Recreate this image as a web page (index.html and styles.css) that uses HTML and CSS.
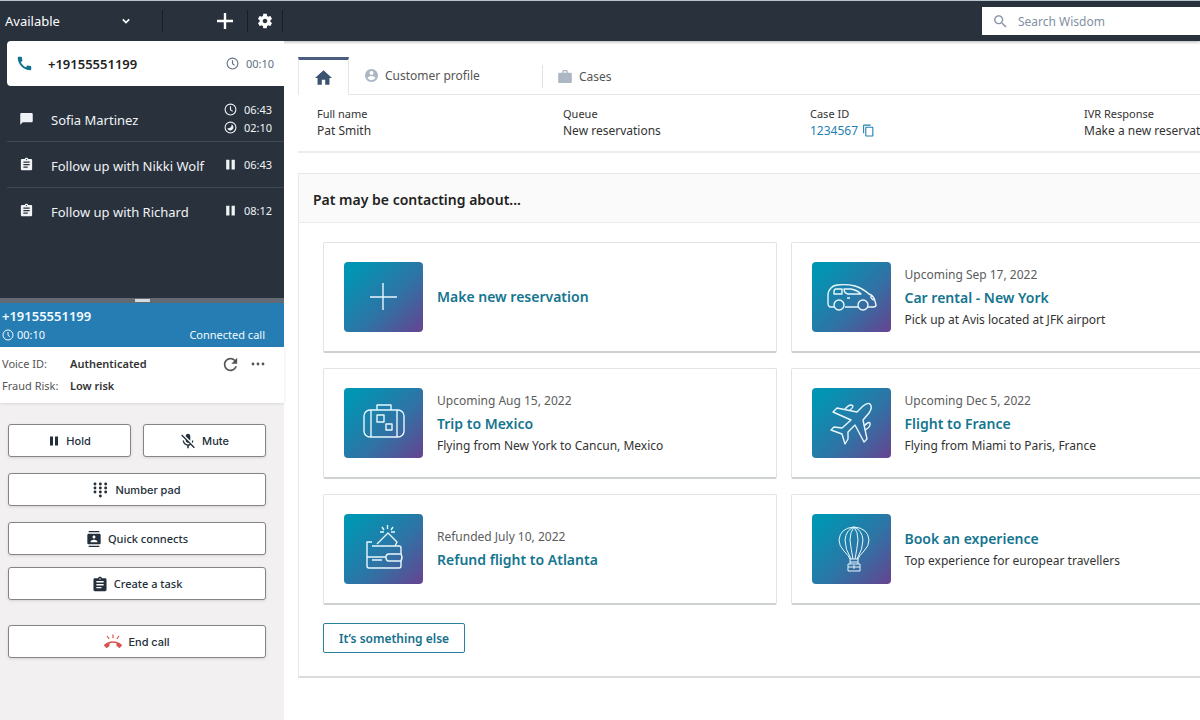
FILE: index.html
```
<!DOCTYPE html>
<html lang="en">
<head>
    <meta charset="UTF-8">
    <meta name="viewport" content="width=device-width, initial-scale=1.0">
    <title>Agent workspace</title>
    <link rel="stylesheet" href="styles.css">
</head>
<body>
    <!-- shared icons -->
    <svg class="defs" width="0" height="0">
        <symbol id="clock" viewBox="0 0 24 24"><g fill="none" stroke="currentColor" stroke-width="2"><circle cx="12" cy="12" r="10"/><path d="M12 6v6.500l4 3"/></g></symbol>
        <symbol id="pause" viewBox="0 0 24 24"><path d="M4 3h6v18H4zM14 3h6v18h-6z"/></symbol>
        <symbol id="task" viewBox="0 0 24 24"><path d="M19 3h-4.180C14.400 1.840 13.300 1 12 1c-1.300 0-2.400.84-2.820 2H5c-1.100 0-2 .9-2 2v14c0 1.100.9 2 2 2h14c1.100 0 2-.9 2-2V5c0-1.100-.9-2-2-2zm-7 0c.55 0 1 .45 1 1s-.45 1-1 1-1-.45-1-1 .45-1 1-1zm2 14H7v-2h7v2zm3-4H7v-2h10v2zm0-4H7V7h10v2z"/></symbol>
    </svg>

    <header class="topbar">
        <div class="status">
            <select class="status-select" aria-label="Status">
                <option>Available</option>
            </select>
            <svg class="chevron" viewBox="0 0 10 10"><path d="M1 3l4 4 4-4"/></svg>
        </div>
        <button class="bar-btn add" aria-label="New">
            <svg viewBox="0 0 16 16" width="16" height="16"><path d="M8 0v16M0 8h16" stroke="currentColor" stroke-width="2.400"/></svg>
        </button>
        <button class="bar-btn gear" aria-label="Settings">
            <svg viewBox="0 0 24 24" width="18" height="18"><path d="M19.14 12.94c.04-.3.06-.61.06-.94 0-.32-.02-.64-.07-.94l2.03-1.58c.18-.14.23-.41.12-.61l-1.92-3.32c-.12-.22-.37-.29-.59-.22l-2.39.96c-.5-.38-1.03-.7-1.62-.94l-.36-2.54c-.04-.24-.24-.41-.48-.41h-3.84c-.24 0-.43.17-.47.41l-.36 2.54c-.59.24-1.13.57-1.62.94l-2.39-.96c-.22-.08-.47 0-.59.22L2.74 8.87c-.12.21-.08.47.12.61l2.03 1.58c-.05.3-.09.63-.09.94s.02.64.07.94l-2.03 1.58c-.18.14-.23.41-.12.61l1.92 3.32c.12.22.37.29.59.22l2.39-.96c.5.38 1.03.7 1.62.94l.36 2.54c.05.24.24.41.48.41h3.84c.24 0 .44-.17.47-.41l.36-2.54c.59-.24 1.13-.56 1.62-.94l2.39.96c.22.08.47 0 .59-.22l1.92-3.32c.12-.22.07-.47-.12-.61l-2.01-1.58zM12 15c-1.700 0-3-1.300-3-3s1.300-3 3-3 3 1.300 3 3-1.300 3-3 3z"/></svg>
        </button>
        <label class="search">
            <svg viewBox="0 0 24 24" width="17" height="17"><path d="M15.5 14h-.79l-.28-.27C15.41 12.59 16 11.11 16 9.500 16 5.910 13.090 3 9.500 3S3 5.910 3 9.500 5.910 16 9.500 16c1.610 0 3.090-.59 4.230-1.570l.27.28v.79l5 4.990L20.490 19l-4.990-5zm-6 0C7.010 14 5 11.990 5 9.500S7.010 5 9.500 5 14 7.010 14 9.500 11.990 14 9.500 14z"/></svg>
            <input type="text" placeholder="Search Wisdom" aria-label="Search Wisdom">
        </label>
    </header>

    <div class="layout">
        <aside class="sidebar">
            <ul class="contacts">
                <li class="contact active">
                    <svg class="kind" viewBox="2 2 20 20"><path d="M20.010 15.380c-1.230 0-2.420-.2-3.530-.56-.35-.12-.74-.03-1.010.24l-1.570 1.970c-2.830-1.350-5.480-3.900-6.890-6.830l1.950-1.660c.27-.28.35-.67.24-1.020-.37-1.110-.56-2.300-.56-3.530 0-.54-.45-.99-.99-.99H4.190C3.650 3 3 3.240 3 3.990 3 13.280 10.730 21 20.010 21c.71 0 .99-.63.99-1.180v-3.450c0-.54-.45-.99-.99-.99z"/></svg>
                    <span class="name">+19155551199</span>
                    <span class="times"><span class="time"><svg><use href="#clock"/></svg>00:10</span></span>
                </li>
                <li class="contact chat">
                    <svg class="kind" viewBox="0 0 24 24"><path d="M20 3H4c-1.100 0-2 .9-2 2v17l4-4h14c1.100 0 2-.9 2-2V5c0-1.100-.9-2-2-2z"/></svg>
                    <span class="name">Sofia Martinez</span>
                    <span class="times">
                        <span class="time"><svg><use href="#clock"/></svg>06:43</span>
                        <span class="time"><svg viewBox="0 0 24 24"><circle cx="12" cy="12" r="10" fill="none" stroke="currentColor" stroke-width="2"/><path d="M14 6q1 7-8 8a6 6 0 1 0 8-8z"/></svg>02:10</span>
                    </span>
                </li>
                <li class="contact">
                    <svg class="kind"><use href="#task"/></svg>
                    <span class="name">Follow up with Nikki Wolf</span>
                    <span class="times"><span class="time"><svg><use href="#pause"/></svg>06:43</span></span>
                </li>
                <li class="contact">
                    <svg class="kind"><use href="#task"/></svg>
                    <span class="name">Follow up with Richard</span>
                    <span class="times"><span class="time"><svg><use href="#pause"/></svg>08:12</span></span>
                </li>
            </ul>
            <div class="splitter"></div>

            <section class="call">
                <div class="call-number">+19155551199</div>
                <div class="call-row">
                    <span class="time"><svg><use href="#clock"/></svg>00:10</span>
                    <span>Connected call</span>
                </div>
            </section>

            <section class="voice">
                <dl>
                    <dt>Voice ID:</dt><dd>Authenticated</dd>
                    <dt>Fraud Risk:</dt><dd>Low risk</dd>
                </dl>
                <div class="voice-tools">
                    <button aria-label="Refresh"><svg viewBox="3 3 18 18" width="15" height="15"><path d="M17.65 6.35C16.2 4.9 14.21 4 12 4c-4.42 0-7.99 3.58-7.99 8s3.57 8 7.99 8c3.73 0 6.84-2.55 7.73-6h-2.08c-.82 2.33-3.04 4-5.65 4-3.31 0-6-2.69-6-6s2.69-6 6-6c1.66 0 3.14.69 4.22 1.78L13 11h7V4l-2.35 2.35z"/></svg></button>
                    <button aria-label="More"><svg viewBox="0 0 14 14" width="14" height="14"><circle cx="2" cy="7" r="1.400"/><circle cx="7" cy="7" r="1.400"/><circle cx="12" cy="7" r="1.400"/></svg></button>
                </div>
            </section>

            <section class="controls">
                <div class="control-pair">
                    <button class="control plain"><svg class="small"><use href="#pause"/></svg>Hold</button>
                    <button class="control plain"><svg viewBox="2 1 20 21"><path d="M19 11h-1.700c0 .74-.16 1.430-.43 2.050l1.230 1.230c.56-.98.9-2.090.9-3.280zm-4.020.17c0-.06.02-.11.02-.17V5c0-1.660-1.340-3-3-3S9 3.340 9 5v.18l5.980 5.990zM4.270 3L3 4.270l6.010 6.010V11c0 1.660 1.330 3 2.990 3 .22 0 .44-.03.65-.08l1.660 1.660c-.71.33-1.500.52-2.310.52-2.760 0-5.300-2.100-5.300-5.100H5c0 3.410 2.720 6.230 6 6.720V21h2v-3.280c.91-.13 1.770-.45 2.540-.9L19.730 21 21 19.730 4.270 3z"/></svg>Mute</button>
                </div>
                <button class="control plain"><svg viewBox="0 0 24 24"><circle cx="3" cy="3" r="2.200"/><circle cx="11" cy="3" r="2.200"/><circle cx="19" cy="3" r="2.200"/><circle cx="3" cy="9" r="2.200"/><circle cx="11" cy="9" r="2.200"/><circle cx="19" cy="9" r="2.200"/><circle cx="3" cy="15" r="2.200"/><circle cx="11" cy="15" r="2.200"/><circle cx="19" cy="15" r="2.200"/><circle cx="11" cy="21" r="2.200"/></svg>Number pad</button>
                <div class="control-stack">
                    <button class="control"><svg viewBox="1 0 22 24"><path d="M20 0H4v2h16V0zM4 24h16v-2H4v2zM20 4H4c-1.100 0-2 .9-2 2v12c0 1.100.9 2 2 2h16c1.100 0 2-.9 2-2V6c0-1.100-.9-2-2-2zm-8 2.750c1.240 0 2.250 1.010 2.250 2.250s-1.010 2.250-2.250 2.250S9.750 10.240 9.750 9 10.760 6.750 12 6.750zM17 17H7v-1.500c0-1.670 3.330-2.500 5-2.500s5 .83 5 2.500V17z"/></svg>Quick connects</button>
                    <button class="control"><svg viewBox="2 0 20 22"><path d="M19 3h-4.180C14.400 1.840 13.300 1 12 1c-1.300 0-2.400.84-2.820 2H5c-1.100 0-2 .9-2 2v14c0 1.100.9 2 2 2h14c1.100 0 2-.9 2-2V5c0-1.100-.9-2-2-2zm-7 0c.55 0 1 .45 1 1s-.45 1-1 1-1-.45-1-1 .45-1 1-1zm2 14H7v-2h7v2zm3-4H7v-2h10v2zm0-4H7V7h10v2z"/></svg>Create a task</button>
                </div>
                <button class="control plain end"><svg viewBox="0 0 24 20"><path d="M12 11c-1.600 0-3.150.25-4.600.72v3.100c0 .39-.23.74-.56.9-.98.49-1.870 1.120-2.660 1.850-.18.18-.43.28-.7.28-.28 0-.53-.11-.71-.29L.29 15.080c-.18-.17-.29-.42-.29-.7 0-.28.11-.53.29-.71C3.340 10.780 7.460 9 12 9s8.660 1.780 11.710 4.670c.18.18.29.43.29.71 0 .28-.11.53-.29.71l-2.480 2.480c-.18.18-.43.29-.71.29-.27 0-.52-.11-.7-.28-.79-.74-1.690-1.360-2.670-1.850-.33-.16-.56-.5-.56-.9v-3.100C15.150 11.250 13.600 11 12 11z"/><path d="M12 0v5M4 2l3 4M20 2l-3 4" fill="none" stroke="currentColor" stroke-width="1.600"/></svg>End call</button>
            </section>
        </aside>

        <main class="workspace">
            <div class="content">
                <nav class="tabs">
                    <a href="#" class="tab home" aria-label="Home"><svg viewBox="2 3 20 17" width="17" height="15"><path d="M10 20v-6h4v6h5v-8h3L12 3 2 12h3v8z"/></svg></a>
                    <a href="#" class="tab profile"><svg viewBox="2 2 20 20" width="13" height="13"><path d="M12 2C6.480 2 2 6.480 2 12s4.480 10 10 10 10-4.480 10-10S17.520 2 12 2zm0 3c1.660 0 3 1.340 3 3s-1.340 3-3 3-3-1.340-3-3 1.340-3 3-3zm0 14.200c-2.500 0-4.710-1.280-6-3.220.03-1.990 4-3.080 6-3.080 1.990 0 5.970 1.090 6 3.080-1.290 1.940-3.500 3.220-6 3.220z"/></svg>Customer profile</a>
                    <a href="#" class="tab cases"><svg viewBox="2 2 20 19" width="14" height="13"><path d="M20 6h-4V4c0-1.110-.89-2-2-2h-4c-1.110 0-2 .89-2 2v2H4c-1.110 0-1.990.89-1.990 2L2 19c0 1.110.89 2 2 2h16c1.110 0 2-.89 2-2V8c0-1.110-.89-2-2-2zm-6 0h-4V4h4v2z"/></svg>Cases</a>
                </nav>

                <dl class="details">
                    <div><dt>Full name</dt><dd>Pat Smith</dd></div>
                    <div><dt>Queue</dt><dd>New reservations</dd></div>
                    <div><dt>Case ID</dt><dd><a href="#">1234567 <svg viewBox="0 0 24 24" width="13" height="13"><path d="M16 1H4c-1.100 0-2 .9-2 2v14h2V3h12V1zm3 4H8c-1.100 0-2 .9-2 2v14c0 1.100.9 2 2 2h11c1.100 0 2-.9 2-2V7c0-1.100-.9-2-2-2zm0 16H8V7h11v14z"/></svg></a></dd></div>
                    <div><dt>IVR Response</dt><dd>Make a new reservation</dd></div>
                </dl>

                <section class="panel">
                    <h2>Pat may be contacting about...</h2>
                    <div class="panel-body">
                        <div class="cards">
                            <article class="card">
                                <svg class="tile" viewBox="0 0 79 70"><path d="M39 21v27M26 35h27"/></svg>
                                <div><a href="#">Make new reservation</a></div>
                            </article>
                            <article class="card">
                                <svg class="tile" viewBox="0 0 79 70">
                                    <path d="M22 45h-3q-3 0-3-4v-8q0-4 3-7 2-2.500 6-3 10-1 18 1 7 2 14 8 5 2 6 7l1 4q0 2-3 2h-5M33 45h13"/>
                                    <circle cx="27" cy="43" r="5"/><circle cx="51" cy="43" r="5"/>
                                    <path d="M24 27h6v5h-8v-2q0-3 2-3zM32 27h7q6 1 10 5H36q-4-1-4-5zM35 36h3M60 33q-3 3 2 5"/>
                                </svg>
                                <div>
                                    <p class="date">Upcoming Sep 17, 2022</p>
                                    <a href="#">Car rental - New York</a>
                                    <p>Pick up at Avis located at JFK airport</p>
                                </div>
                            </article>
                            <article class="card">
                                <svg class="tile" viewBox="0 0 79 70">
                                    <rect x="20" y="22" width="40" height="27" rx="6"/>
                                    <path d="M33 22v-5h14v5M27 22v27M53 22v27M33 27h7v7h-7zM42 36h6v6h-6z"/>
                                </svg>
                                <div>
                                    <p class="date">Upcoming Aug 15, 2022</p>
                                    <a href="#">Trip to Mexico</a>
                                    <p>Flying from New York to Cancun, Mexico</p>
                                </div>
                            </article>
                            <article class="card">
                                <svg class="tile" viewBox="0 0 79 70">
                                    <path d="M58 16q3 3-1 9l-6 7 4 19-3 3-9-17-7 7v7l-3 5-3-10-11-4 3-3 8 1 9-8-18-8 4-4 20 4 6-6q5-4 7-2z"/>
                                    <path d="M33 21q5-6 8-3 0 2-3 4M52 38q5-5 6-3 1 4-5 7"/>
                                </svg>
                                <div>
                                    <p class="date">Upcoming Dec 5, 2022</p>
                                    <a href="#">Flight to France</a>
                                    <p>Flying from Miami to Paris, France</p>
                                </div>
                            </article>
                            <article class="card">
                                <svg class="tile" viewBox="0 0 79 70">
                                    <path d="M28 28h-5v24q0 2 2 2h30q2 0 2-2v-5M57 40v-6q0-2-2-2H28M33 30l11-11 9 9-2 4"/>
                                    <path d="M57 40H45q-3 0-3 3.500t3 3.500h12q2-3.500 0-7zM23 43h19M28 46h10M43.500 11v4M38 13l2 3M49 13l-2 3M36 18h4M47 18h4"/>
                                </svg>
                                <div>
                                    <p class="date">Refunded July 10, 2022</p>
                                    <a href="#">Refund flight to Atlanta</a>
                                </div>
                            </article>
                            <article class="card">
                                <svg class="tile thin" viewBox="0 0 79 70">
                                    <path d="M38 45q-1-3-6-8-5-5-5-11 1-12 15-13 14 1 15 13 0 6-5 11-5 5-6 8zM39 45q-6-10-6-19 1-10 9-13 8 3 9 13 0 9-6 19M41 45q-2-10-3-19 0-8 4-13 4 5 4 13-1 9-3 19"/>
                                    <path d="M38 45v5M46 45v5M38 48h8M36 50h12v7H36zM36 53h12M42 51v4"/>
                                </svg>
                                <div>
                                    <a href="#">Book an experience</a>
                                    <p>Top experience for europear travellers</p>
                                </div>
                            </article>
                        </div>
                        <button class="other">It’s something else</button>
                    </div>
                </section>
            </div>
        </main>
    </div>
</body>
</html>
```
FILE: styles.css
```
* {
    box-sizing: border-box;
}
body {
    margin: 0;
    min-height: 100vh;
    display: flex;
    flex-direction: column;
    font-family: "Noto Sans", sans-serif;
    font-size: 12px;
    line-height: 18px;
    color: #333;
    background: #fff;
    border-top: 1px solid #b7c4cc;
    border-bottom: 1px solid #d0d0d0;
    overflow-x: hidden;
}
p, h2, ul, dl, dd {
    margin: 0;
    padding: 0;
}
a {
    text-decoration: none;
}
button {
    font-family: inherit;
    cursor: pointer;
}
svg {
    fill: currentColor;
    flex-shrink: 0;
}
.defs {
    position: absolute;
}

/* top bar */
.topbar {
    display: flex;
    align-items: center;
    height: 40px;
    background: #29313d;
    color: #fff;
    box-shadow: 0 1px 3px rgba(0, 0, 0, 0.3);
}
.status {
    display: flex;
    align-items: center;
    width: 163px;
    height: 22px;
    border-right: 1px solid #161e29;
}
.status-select {
    appearance: none;
    width: 122px;
    padding: 0 5px;
    border: none;
    background: none;
    color: #fff;
    font-family: inherit;
    font-size: 13px;
}
.chevron {
    width: 8px;
    height: 8px;
    fill: none;
    stroke: #fff;
    stroke-width: 2;
}
.bar-btn {
    display: flex;
    align-items: center;
    justify-content: center;
    height: 22px;
    padding: 0;
    border: none;
    border-right: 1px solid #161e29;
    background: none;
    color: #fff;
}
.add {
    width: 85px;
    padding-left: 40px;
}
.gear {
    width: 35px;
}
.search {
    display: flex;
    align-items: center;
    gap: 9px;
    width: 218px;
    height: 28px;
    margin-left: auto;
    padding-left: 10px;
    background: #fff;
    color: #8795a5;
}
.search input {
    width: 100%;
    padding: 0;
    border: none;
    outline: none;
    font-family: inherit;
    font-size: 12px;
}
.search input::placeholder {
    color: #8290a2;
}

.layout {
    display: flex;
    flex: 1;
}

/* contact control panel */
.sidebar {
    display: flex;
    flex-direction: column;
    width: 284px;
    flex-shrink: 0;
    background: #f2f0f1;
}
.contacts {
    padding: 0 0 65px 7px;
    list-style: none;
    background: #29313d;
    color: #f0f3f5;
}
.contact {
    display: flex;
    align-items: center;
    height: 46px;
    padding: 0 12px;
    border-top: 1px solid #3d4b56;
}
.contact.active {
    height: 45px;
    border: none;
    border-radius: 4px 0 0 4px;
    padding: 0 10px;
    background: #fff;
    color: #222;
}
.contact.chat {
    height: 55px;
    padding-top: 10px;
    border: none;
}
.kind {
    width: 15px;
    height: 15px;
    margin-right: 17px;
}
.name {
    padding-top: 2px;
    font-size: 13px;
}
.active .kind {
    color: #11718f;
    margin-right: 16px;
}
.active .name {
    padding: 0;
    font-weight: 600;
}
.active .time {
    color: #5f6f80;
}
.times {
    margin-left: auto;
}
.time {
    display: flex;
    align-items: center;
    gap: 7px;
    font-size: 11px;
}
.time svg {
    width: 13px;
    height: 13px;
}
.splitter {
    height: 5px;
    background: #626b74;
}
.splitter::before {
    content: "";
    display: block;
    width: 15px;
    height: 3px;
    margin: 0 auto;
    border-top: 1px solid #626b74;
    background: #d5dade;
}
.call {
    padding: 4px 19px 3px 2px;
    background: #267db3;
    color: #f2fbff;
}
.call-number {
    font-size: 13px;
    font-weight: 600;
}
.call-row {
    display: flex;
    justify-content: space-between;
    align-items: center;
    font-size: 11px;
    line-height: 19px;
}
.call-row .time {
    gap: 3px;
}
.call-row .time svg {
    width: 12px;
    height: 12px;
}
.voice {
    display: flex;
    justify-content: space-between;
    padding: 6px 19px 6px 2px;
    background: #fff;
    box-shadow: 0 1px 3px rgba(0, 0, 0, 0.1);
    font-size: 11px;
    line-height: 22px;
}
.voice dl {
    display: grid;
    grid-template-columns: 68px auto;
    color: #555;
}
.voice dd {
    font-weight: 600;
    color: #333;
}
.voice-tools {
    display: flex;
    gap: 13px;
    height: 22px;
}
.voice-tools button {
    display: flex;
    align-items: center;
    padding: 0;
    border: none;
    background: none;
    color: #555;
}
.controls {
    display: flex;
    flex-direction: column;
    gap: 16px;
    padding: 21px 18px 20px 8px;
}
.control-pair {
    display: grid;
    grid-template-columns: 1fr 1fr;
    gap: 12px;
}
.control-stack {
    display: grid;
    gap: 12px;
}
.control {
    display: flex;
    align-items: center;
    justify-content: center;
    gap: 6px;
    height: 33px;
    border: 1px solid #858585;
    border-radius: 3px;
    background: #fff;
    box-shadow: 0 1px 3px rgba(0, 0, 0, 0.12);
    color: #232f3a;
    font-size: 11px;
    font-weight: 500;
}
.control svg {
    width: 16px;
    height: 16px;
}
.control .small {
    width: 12px;
    height: 14px;
}
.plain {
    font-family: Inter, sans-serif;
}
.end {
    margin-top: 9px;
}
.end svg {
    width: 18px;
    color: #d9534f;
}

/* agent workspace, wide content is clipped at the window edge */
.workspace {
    flex: 1;
    min-width: 0;
    padding: 16px 0 42px 14px;
    overflow: hidden;
}
.content {
    min-width: 971px;
}
.tabs {
    display: flex;
    height: 38px;
    border-bottom: 1px solid #e6e6e6;
}
.tab {
    display: flex;
    align-items: center;
    gap: 7px;
    color: #555;
}
.tab svg {
    color: #adb7c4;
}
.home {
    justify-content: center;
    width: 51px;
    height: 38px;
    border: 1px solid #e6e6e6;
    border-top: 3px solid #4a5d7e;
    border-bottom: none;
    background: #fff;
}
.home svg {
    color: #3b5371;
}
.profile {
    width: 193px;
    padding-left: 16px;
}
.cases {
    height: 23px;
    margin-top: 8px;
    padding-left: 15px;
    border-left: 1px solid #e2e2e2;
}
.details {
    display: grid;
    grid-template-columns: 246px 247px 274px 1fr;
    padding: 10px 0 12px 19px;
    border-bottom: 2px solid #ececec;
    line-height: 17px;
}
.details dt {
    font-size: 11px;
}
.details a {
    display: flex;
    align-items: center;
    gap: 4px;
    color: #1f7fb0;
}
.panel {
    margin-top: 20px;
    border: 1px solid #e8e8e8;
    border-bottom: 2px solid #dcdcdc;
}
.panel h2 {
    padding: 17px 14px 13px;
    border-bottom: 1px solid #ebebeb;
    background: #fafafa;
    color: #222;
    font-size: 14px;
    font-weight: 600;
}
.panel-body {
    padding: 19px 24px 23px;
}
.cards {
    display: grid;
    grid-template-columns: 1fr 1fr;
    gap: 15px 14px;
}
.card {
    display: flex;
    align-items: center;
    gap: 14px;
    height: 111px;
    padding: 0 20px;
    border: 1px solid #e2e4e4;
    border-bottom: 2px solid #cdd2d1;
    border-radius: 2px;
}
.card a {
    display: block;
    color: #14758f;
    font-size: 14px;
    font-weight: 600;
    line-height: 24px;
}
.card p {
    line-height: 20px;
}
.card .date {
    color: #5c5c5c;
    line-height: 22px;
}
.tile {
    width: 79px;
    height: 70px;
    border-radius: 4px;
    background: linear-gradient(135deg, #0295b3 12%, #2f73a5 58%, #674390);
    fill: none;
    stroke: #e8f8fc;
    stroke-width: 1.4;
    stroke-linejoin: round;
}
.thin {
    stroke-width: 1;
}
.other {
    height: 30px;
    margin-top: 18px;
    padding: 0 15px;
    border: 1px solid #2a7f9a;
    border-radius: 2px;
    background: #fff;
    color: #14708c;
    font-size: 12px;
    font-weight: 600;
}
```
